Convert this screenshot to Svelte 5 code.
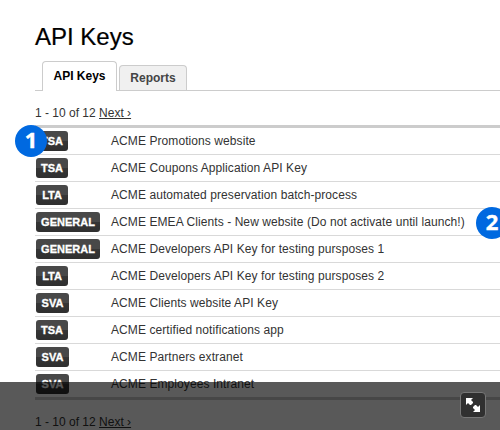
<script>
  const rows = [
    ['TSA', 32, 'ACME Promotions website'],
    ['TSA', 32, 'ACME Coupons Application API Key'],
    ['LTA', 32, 'ACME automated preservation batch-process'],
    ['GENERAL', 64, 'ACME EMEA Clients - New website (Do not activate until launch!)'],
    ['GENERAL', 64, 'ACME Developers API Key for testing pursposes 1'],
    ['LTA', 32, 'ACME Developers API Key for testing pursposes 2'],
    ['SVA', 33, 'ACME Clients website API Key'],
    ['TSA', 32, 'ACME certified notifications app'],
    ['SVA', 33, 'ACME Partners extranet'],
    ['SVA', 33, 'ACME Employees Intranet'],
  ];
</script>

{#snippet pager()}
  <p class="pager"><span>1 - 10 of 12</span> <a href="#next">Next ›</a></p>
{/snippet}

<main class="page">
  <h1>API Keys</h1>
  <nav class="tabs">
    <span class="tab active">API Keys</span>
    <span class="tab">Reports</span>
  </nav>
  {@render pager()}
  <div class="list">
    {#each rows as [kind, width, name]}
      <div class="row">
        <div class="kind"><span class="badge" style="width: {width}px"><b>{kind}</b></span></div>
        <div class="name">{name}</div>
      </div>
    {/each}
  </div>
  {@render pager()}

  <span class="marker one">1</span>
  <span class="marker two">2</span>

  <div class="overlay">
    <button class="expand" aria-label="Expand">
      <svg width="16" height="16" viewBox="0 0 16 16" fill="#fff">
        <path d="M1 1H8L6 3L8 5V6L6 8H5L3 6L1 8Z" />
        <path d="M15 15H8L10 13L8 11V10L10 8H11L13 10L15 8Z" />
      </svg>
    </button>
  </div>
</main>

<style>
  :global(body) { margin: 0; overflow: hidden; background: #fff; }
  .page {
    position: relative;
    box-sizing: border-box;
    width: 500px;
    height: 430px;
    padding: 22px 0 0 35px;
    overflow: hidden;
    font: 12px/16px "Liberation Sans", Arial, sans-serif;
    color: #333;
  }
  h1 { margin: 0; height: 39px; font-size: 24px; font-weight: 400; line-height: 30px; color: #000; -webkit-text-stroke: 0.2px; }
  .tabs {
    display: flex;
    align-items: flex-end;
    gap: 2px;
    box-sizing: border-box;
    height: 30px;
    padding-left: 7px;
    border-bottom: 1px solid #ccc;
  }
  .tab {
    box-sizing: border-box;
    width: 68px;
    height: 25px;
    border: 1px solid #ccc;
    border-bottom: 0;
    border-radius: 4px 4px 0 0;
    background: #f0f0f0;
    color: #444;
    font-weight: 700;
    line-height: 24px;
    text-align: center;
    white-space: nowrap;
  }
  .tab.active { width: 75px; height: 30px; margin-bottom: -1px; background: #fff; color: #000; line-height: 28px; }
  .pager { margin: 0; height: 20px; padding-top: 14px; white-space: nowrap; }
  .pager a { color: #333; text-decoration: underline; text-decoration-thickness: 1px; text-underline-offset: 1px; text-decoration-skip-ink: none; }
  .list { border-top: 3px solid #ccc; border-bottom: 3px solid #ccc; }
  .row { display: flex; align-items: center; box-sizing: border-box; height: 27px; border-bottom: 1px solid #d9d9d9; }
  .row:last-child { height: 26px; border-bottom: 0; }
  .kind { width: 76px; padding-left: 1px; box-sizing: border-box; }
  .badge {
    display: flex;
    justify-content: center;
    height: 20px;
    border-radius: 3px;
    background: linear-gradient(#484848 0 50%, #363636 50%, #2f2f2f);
    color: #fff;
    font-size: 11px;
    line-height: 20px;
    -webkit-text-stroke: 0.3px #fff;
  }
  .name { white-space: nowrap; letter-spacing: 0.08px; }
  .marker {
    position: absolute;
    width: 32px;
    height: 32px;
    border-radius: 50%;
    background: #0069e0;
    color: #fff;
    font: 700 22px/29px "Open Sans", sans-serif;
    text-align: center;
    -webkit-text-stroke: 0.4px #fff;
  }
  .one { left: 15px; top: 125px; }
  .two { left: 476px; top: 207px; }
  .overlay {
    position: absolute;
    left: 0;
    top: 382px;
    width: 500px;
    height: 48px;
    background: rgba(0, 0, 0, 0.65);
  }
  .expand {
    position: absolute;
    left: 460px;
    top: 10px;
    display: grid;
    place-items: center;
    box-sizing: border-box;
    width: 26px;
    height: 26px;
    padding: 0;
    border: 1px solid #777;
    border-radius: 4px;
    background: #303030;
  }
</style>
